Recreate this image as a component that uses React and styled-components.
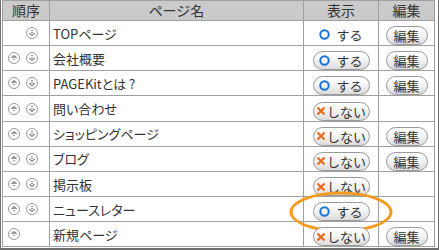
import React from 'react';
import styled, { createGlobalStyle } from 'styled-components';

const Global = createGlobalStyle`
    html, body {
        margin: 0;
        padding: 0;
        background: #fff;
    }
    body {
        font-family: 'Noto Sans CJK JP', 'Liberation Sans', sans-serif;
        color: #333;
    }
`;

const Frame = styled.div`
    position: relative;
    box-sizing: border-box;
    width: 439px;
    height: 250px;
    border: 1px solid #707070;
    border-top: none;
    border-bottom-width: 2px;
    padding: 0 3px 2px 1px;
    background: #fff;
`;

const Table = styled.table`
    width: 100%;
    border-collapse: collapse;
    table-layout: fixed;

    th, td {
        border: 1px solid #a0a0a0;
        padding: 0;
    }
`;

const Head = styled.th`
    height: 19px;
    background: #cacaca;
    font-weight: normal;
    font-size: 14px;
    line-height: 19px;
    color: #333;
    text-align: center;
`;

const Row = styled.tr`
    height: 25px;
`;

const OrderCell = styled.td`
    height: 24px;
`;

const Arrows = styled.div`
    display: flex;
    gap: 6px;
    padding-left: 5px;
    align-items: center;
`;

const Slot = styled.span`
    display: inline-flex;
    width: 12px;
    height: 12px;
`;

const NameCell = styled.td`
    padding-left: 3px !important;
    font-size: 13px;
    font-feature-settings: 'palt';
    color: #333;
    white-space: nowrap;
`;

const CenterCell = styled.td`
    text-align: center;
    vertical-align: middle;
`;

const Pill = styled.span`
    position: relative;
    box-sizing: border-box;
    display: inline-flex;
    align-items: center;
    justify-content: center;
    gap: ${p => (p.$on ? '6px' : '1px')};
    width: ${p => p.$w}px;
    height: 19px;
    border: 1px solid #9a9a9a;
    border-radius: 10px;
    background: linear-gradient(#ffffff 0%, #f4f4f4 45%, #dcdcdc 100%);
    font-size: 13px;
    color: #333;
    line-height: 1;
    vertical-align: middle;
`;

const Plain = styled.span`
    display: inline-flex;
    align-items: center;
    justify-content: center;
    gap: 6px;
    font-size: 13px;
    color: #333;
`;

const Mark = styled.span`
    position: absolute;
    left: 50%;
    top: 50%;
    width: 103px;
    height: 41px;
    transform: translate(-50%, -50%);
    box-sizing: border-box;
    border: 3px solid #f39a1f;
    border-radius: 50%;
    pointer-events: none;
`;

function Arrow({ up }) {
    return (
        <svg width="12" height="12" viewBox="0 0 12 12">
            <circle cx="6" cy="6" r="5.5" fill="#fff" stroke="#999" strokeWidth="1" />
            {up ? (
                <g stroke="#333" strokeWidth="1" fill="none">
                    <path d="M3.5 6 L6 3.5 L8.5 6" />
                    <path d="M6 5 V9" strokeDasharray="1 1" />
                </g>
            ) : (
                <g stroke="#333" strokeWidth="1" fill="none">
                    <path d="M3.5 6 L6 8.5 L8.5 6" />
                    <path d="M6 3 V7" strokeDasharray="1 1" />
                </g>
            )}
        </svg>
    );
}

function Ring() {
    return (
        <svg width="11" height="11" viewBox="0 0 11 11">
            <circle cx="5.5" cy="5.5" r="4.2" fill="none" stroke="#1a72d8" strokeWidth="2" />
        </svg>
    );
}

function Cross() {
    return (
        <svg width="10" height="10" viewBox="0 0 10 10">
            <path d="M1.5 1.5 L8.5 8.5 M8.5 1.5 L1.5 8.5" stroke="#f0681a" strokeWidth="2.2" />
        </svg>
    );
}

const pages = [
    { name: 'TOPページ', up: false, down: true, show: 'current', edit: true },
    { name: '会社概要', up: true, down: true, show: 'on', edit: true },
    { name: 'PAGEKitとは ?', up: true, down: true, show: 'on', edit: true },
    { name: '問い合わせ', up: true, down: true, show: 'off', edit: false },
    { name: 'ショッピングページ', up: true, down: true, show: 'off', edit: true },
    { name: 'ブログ', up: true, down: true, show: 'off', edit: true },
    { name: '掲示板', up: true, down: true, show: 'off', edit: false },
    { name: 'ニュースレター', up: true, down: true, show: 'on', edit: false, marked: true },
    { name: '新規ページ', up: true, down: false, show: 'off', edit: true },
];

function ShowState({ show, marked }) {
    if (show === 'current') {
        return <Plain><Ring />する</Plain>;
    }
    if (show === 'on') {
        return (
            <Pill $w={57} $on>
                <Ring />する
                {marked && <Mark />}
            </Pill>
        );
    }
    return <Pill $w={57}><Cross />しない</Pill>;
}

export default function App() {
    return (
        <Frame>
            <Global />
            <Table>
                <colgroup>
                    <col style={{ width: 47 }} />
                    <col />
                    <col style={{ width: 75 }} />
                    <col style={{ width: 56 }} />
                </colgroup>
                <thead>
                    <tr>
                        <Head>順序</Head>
                        <Head>ページ名</Head>
                        <Head>表示</Head>
                        <Head>編集</Head>
                    </tr>
                </thead>
                <tbody>
                    {pages.map(p => (
                        <Row key={p.name}>
                            <OrderCell>
                                <Arrows>
                                    <Slot>{p.up && <Arrow up />}</Slot>
                                    <Slot>{p.down && <Arrow />}</Slot>
                                </Arrows>
                            </OrderCell>
                            <NameCell>{p.name}</NameCell>
                            <CenterCell>
                                <ShowState show={p.show} marked={p.marked} />
                            </CenterCell>
                            <CenterCell>
                                {p.edit && <Pill $w={42}>編集</Pill>}
                            </CenterCell>
                        </Row>
                    ))}
                </tbody>
            </Table>
        </Frame>
    );
}
